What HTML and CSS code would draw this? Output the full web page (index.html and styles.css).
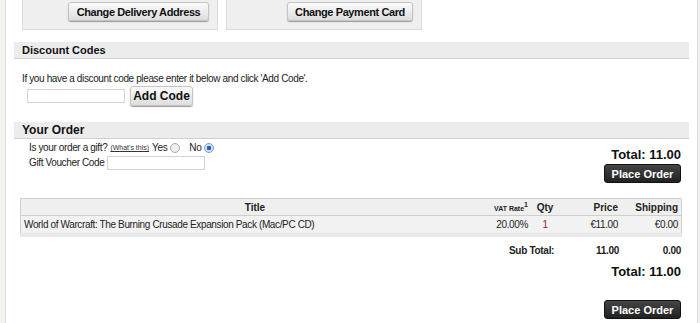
FILE: index.html
```html
<!DOCTYPE html>
<html>
<head>
<meta charset="utf-8">
<link rel="stylesheet" href="styles.css">
</head>
<body>
<div class="page">
  <div class="boxes">
    <div class="box box-a"><button class="btn-light btn-wide">Change Delivery Address</button></div>
    <div class="box box-b"><button class="btn-light btn-card">Change Payment Card</button></div>
  </div>

  <div class="section-bar bar-discount">Discount Codes</div>
  <p class="discount-text">If you have a discount code please enter it below and click 'Add Code'.</p>
  <div class="discount-row">
    <input class="code-input" type="text">
    <button class="btn-light btn-add">Add Code</button>
  </div>

  <div class="section-bar bar-order">Your Order</div>
  <div class="order-top">
    <div class="gift">
      <div class="gift-row">Is your order a gift? <a class="whats">(What's this)</a> Yes <span class="radio"></span> <span class="no">No</span> <span class="radio checked"></span></div>
      <div class="gift-row voucher">Gift Voucher Code <input class="voucher-input" type="text"></div>
    </div>
    <div class="total-box">
      <div class="total">Total: 11.00</div>
      <button class="btn-dark">Place Order</button>
    </div>
  </div>

  <table class="items">
    <thead>
      <tr>
        <th class="c-title">Title</th>
        <th class="c-vat"><span class="vat-small">VAT Rate</span><sup>1</sup></th>
        <th class="c-qty">Qty</th>
        <th class="c-price">Price</th>
        <th class="c-ship">Shipping</th>
      </tr>
    </thead>
    <tbody>
      <tr>
        <td class="c-title-d">World of Warcraft: The Burning Crusade Expansion Pack (Mac/PC CD)</td>
        <td class="c-vat">20.00%</td>
        <td class="c-qty">1</td>
        <td class="c-price">€11.00</td>
        <td class="c-ship">€0.00</td>
      </tr>
    </tbody>
  </table>

  <div class="subtotal">
    <span class="sub-label">Sub Total:</span>
    <span class="sub-price">11.00</span>
    <span class="sub-ship">0.00</span>
  </div>
  <div class="bottom-total">
    <div class="total">Total: 11.00</div>
    <button class="btn-dark btn-bottom">Place Order</button>
  </div>
</div>
</body>
</html>
```
FILE: styles.css
```css
html, body {
  margin: 0;
  padding: 0;
  background: #f4f3f0;
  font-family: "Liberation Sans", Arial, sans-serif;
  font-size: 11px;
  color: #222;
}
.page {
  margin-left: 5px;
  width: 693px;
  height: 323px;
  box-sizing: border-box;
  background: #fff;
  border-left: 1px solid #dcdcdc;
  border-right: 1px solid #dcdcdc;
  overflow: hidden;
}
.boxes {
  display: flex;
  gap: 8px;
  padding-left: 16px;
}
.box {
  box-sizing: border-box;
  height: 30px;
  background: #efefef;
  border: 1px solid #dcdcdc;
  border-top: none;
  display: flex;
  justify-content: flex-end;
  align-items: flex-start;
  padding: 2px 8px 0 0;
}
.box-a { width: 196px; }
.box-b { width: 196px; }
.btn-light {
  font-family: "Liberation Sans", Arial, sans-serif;
  font-weight: bold;
  font-size: 11px;
  letter-spacing: -0.4px;
  white-space: nowrap;
  color: #111;
  height: 19px;
  padding: 0;
  border: 1px solid #c4c4c4;
  border-radius: 3px;
  background: linear-gradient(#fbfbfb, #dedede);
  box-shadow: 0 1px 1px #999;
}
.btn-wide { width: 141px; }
.btn-card { width: 126px; }
.section-bar {
  margin: 0 8px;
  height: 16px;
  line-height: 16px;
  background: #ececec;
  border-bottom: 1px solid #cfcfcf;
  padding-left: 8px;
  font-weight: bold;
  font-size: 11px;
  color: #111;
}
.bar-discount { margin-top: 12px; }
.discount-text {
  margin: 14px 0 0 16px;
  font-size: 10px;
  letter-spacing: -0.37px;
  line-height: 12px;
}
.discount-row {
  display: flex;
  align-items: center;
  padding-left: 21px;
  margin-top: 1px;
  gap: 5px;
}
.code-input {
  box-sizing: border-box;
  width: 98px;
  height: 14px;
  border: 1px solid #d4d4d4;
  padding: 0;
  margin: 0;
}
.btn-add {
  width: 63px;
  height: 20px;
  font-size: 12px;
  letter-spacing: 0;
}
.bar-order { margin-top: 16px; font-size: 12px; }
.order-top {
  display: flex;
  justify-content: space-between;
  padding: 3px 16px 0 23px;
}
.gift-row {
  font-size: 10px;
  letter-spacing: -0.37px;
  line-height: 12px;
  display: flex;
  align-items: center;
  gap: 3px;
}
.whats {
  font-size: 7px;
  letter-spacing: 0;
  text-decoration: underline;
  color: #333;
}
.no { margin-left: 6px; }
.radio {
  display: inline-block;
  width: 8px;
  height: 8px;
  border-radius: 50%;
  border: 1px solid #aaa;
  background: #eee;
}
.radio.checked {
  background: radial-gradient(circle, #2a5db0 0 2px, #cfe0f5 2.5px);
  border-color: #7a9cc6;
}
.voucher { margin-top: 2px; }
.voucher-input {
  box-sizing: border-box;
  width: 98px;
  height: 14px;
  border: 1px solid #d4d4d4;
  padding: 0;
  margin: 0;
}
.total-box {
  display: flex;
  flex-direction: column;
  align-items: flex-end;
  padding-top: 6px;
}
.total {
  font-weight: bold;
  font-size: 13px;
  line-height: 14px;
  color: #111;
}
.btn-dark {
  margin-top: 2px;
  width: 77px;
  height: 19px;
  padding: 0;
  background: linear-gradient(#444, #222);
  color: #fff;
  font-family: "Liberation Sans", Arial, sans-serif;
  font-weight: bold;
  font-size: 11px;
  border: 1px solid #111;
  border-radius: 3px;
}
.items {
  margin: 15px 0 0 14px;
  width: 662px;
  border-collapse: collapse;
  background: #efefef;
  border: 1px solid #cfcfcf;
  border-bottom: 4px solid #e8e8e8;
  font-size: 10px;
  table-layout: fixed;
}
.items th {
  height: 16px;
  font-weight: bold;
  border-bottom: 1px solid #cfcfcf;
  padding: 0 3px;
  font-size: 10px;
}
.items td {
  height: 17px;
  padding: 0 3px;
  border-bottom: 1px solid #b9b9b9;
  background: #f2f2f2;
  letter-spacing: -0.37px;
}
.c-title { width: 462px; text-align: center; }
.c-title-d { text-align: left; }
.c-vat { width: 36px; text-align: right; }
.c-qty { width: 22px; text-align: center; }
.c-price { width: 56px; text-align: right; }
.c-ship { width: 54px; text-align: right; }
td.c-qty { color: #8b2a1a; }
.vat-small { font-size: 7px; }
.items sup { font-size: 7px; }
.subtotal {
  display: flex;
  padding-left: 503px;
  margin-top: 8px;
  font-size: 10px;
  font-weight: bold;
  letter-spacing: -0.3px;
  line-height: 12px;
  white-space: nowrap;
}
.sub-label { width: 45px; }
.sub-price { width: 65px; text-align: right; }
.sub-ship { width: 62px; text-align: right; }
.bottom-total {
  display: flex;
  flex-direction: column;
  align-items: flex-end;
  padding-right: 16px;
  margin-top: 8px;
}
.btn-bottom { margin-top: 21px; }
```
